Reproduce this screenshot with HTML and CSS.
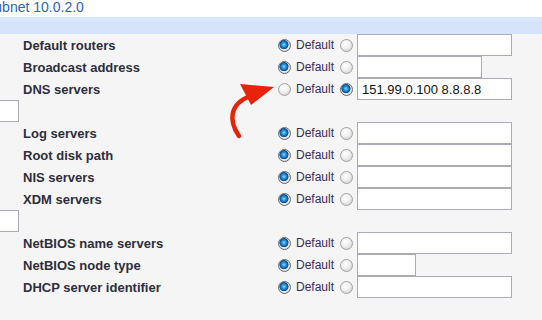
FILE: index.html
```html
<!DOCTYPE html>
<html lang="en">
<head>
    <meta charset="UTF-8">
    <title>Subnet 10.0.2.0</title>
    <link rel="stylesheet" href="styles.css">
</head>
<body>

<div class="top">
    <span class="title">Subnet 10.0.2.0</span>
</div>
<div class="band"></div>

<div class="opts">
    <div class="row">
        <span class="label">Default routers</span>
        <input type="radio" name="r1" checked> <span class="def">Default</span> <input type="radio" name="r1">
        <input type="text" class="field">
    </div>
    <div class="row">
        <span class="label">Broadcast address</span>
        <input type="radio" name="r2" checked> <span class="def">Default</span> <input type="radio" name="r2">
        <input type="text" class="field mid">
    </div>
    <div class="row">
        <span class="label">DNS servers</span>
        <input type="radio" name="r3"> <span class="def">Default</span> <input type="radio" name="r3" checked>
        <input type="text" class="field" value="151.99.0.100 8.8.8.8">
    </div>
    <div class="row">
        <input type="text" class="stub">
    </div>
    <div class="row">
        <span class="label">Log servers</span>
        <input type="radio" name="r4" checked> <span class="def">Default</span> <input type="radio" name="r4">
        <input type="text" class="field">
    </div>
    <div class="row">
        <span class="label">Root disk path</span>
        <input type="radio" name="r5" checked> <span class="def">Default</span> <input type="radio" name="r5">
        <input type="text" class="field">
    </div>
    <div class="row">
        <span class="label">NIS servers</span>
        <input type="radio" name="r6" checked> <span class="def">Default</span> <input type="radio" name="r6">
        <input type="text" class="field">
    </div>
    <div class="row">
        <span class="label">XDM servers</span>
        <input type="radio" name="r7" checked> <span class="def">Default</span> <input type="radio" name="r7">
        <input type="text" class="field">
    </div>
    <div class="row">
        <input type="text" class="stub">
    </div>
    <div class="row">
        <span class="label">NetBIOS name servers</span>
        <input type="radio" name="r8" checked> <span class="def">Default</span> <input type="radio" name="r8">
        <input type="text" class="field">
    </div>
    <div class="row">
        <span class="label">NetBIOS node type</span>
        <input type="radio" name="r9" checked> <span class="def">Default</span> <input type="radio" name="r9">
        <input type="text" class="field short">
    </div>
    <div class="row">
        <span class="label">DHCP server identifier</span>
        <input type="radio" name="r10" checked> <span class="def">Default</span> <input type="radio" name="r10">
        <input type="text" class="field">
    </div>
</div>

<!-- red arrow pointing at the DNS "Default" choice -->
<svg class="arrow" width="60" height="70" viewBox="220 75 60 70">
    <path d="M239 136 C 228 120, 230 104, 250 96" fill="none" stroke="#e8230c" stroke-width="4.5" stroke-linecap="round"/>
    <polygon points="240,84 274,87 251,105" fill="#e8230c"/>
</svg>

</body>
</html>
```

FILE: styles.css
```css
body {
    margin: 0;
    background-color: #f5f5f5;
    font-family: 'Liberation Sans', Arial, sans-serif;
    overflow: hidden;
}
.top {
    background-color: #ffffff;
    height: 17px;
    overflow: hidden;
}
.title {
    display: block;
    margin-left: -15px;
    margin-top: -3px;
    font-size: 14px;
    line-height: 20px;
    color: #2f62b8;
}
.band {
    height: 17px;
    background-color: #d6e4fa;
}
.opts {
    display: flex;
    flex-direction: column;
}
.row {
    display: flex;
    align-items: center;
    height: 22px;
}
.label {
    width: 277px;
    padding-left: 23px;
    box-sizing: border-box;
    font-size: 13px;
    font-weight: bold;
    color: #2e2e3c;
}
.def {
    font-size: 12px;
    color: #3a2c5c;
    margin: 0 5px 0 5px;
}
input[type="radio"] {
    appearance: none;
    -webkit-appearance: none;
    width: 13px;
    height: 13px;
    margin: 0 0 0 1px;
    border-radius: 50%;
    border: 1px solid #a0a0a4;
    background: radial-gradient(circle at 40% 35%, #ffffff 0, #f2f2f2 40%, #c9c9cc 100%);
    box-sizing: border-box;
}
input[type="radio"]:checked {
    border-color: #6b6b70;
    background: radial-gradient(circle at 45% 42%, #8fd8ff 0, #2090d8 25%, #0a4f8c 48%, #e8e8ea 56%, #c6c6ca 100%);
}
.field {
    width: 155px;
    height: 22px;
    box-sizing: border-box;
    margin: 0 0 0 4px;
    padding: 0 4px;
    border: 1px solid #abaab6;
    background-color: #ffffff;
    font-family: 'Liberation Sans', Arial, sans-serif;
    font-size: 13px;
    color: #111111;
}
.mid {
    width: 125px;
}
.short {
    width: 59px;
}
.stub {
    width: 30px;
    height: 22px;
    box-sizing: border-box;
    margin: 0 0 0 -11px;
    border: 1px solid #abaab6;
    background-color: #ffffff;
}
.arrow {
    position: absolute;
    left: 220px;
    top: 75px;
}
```
